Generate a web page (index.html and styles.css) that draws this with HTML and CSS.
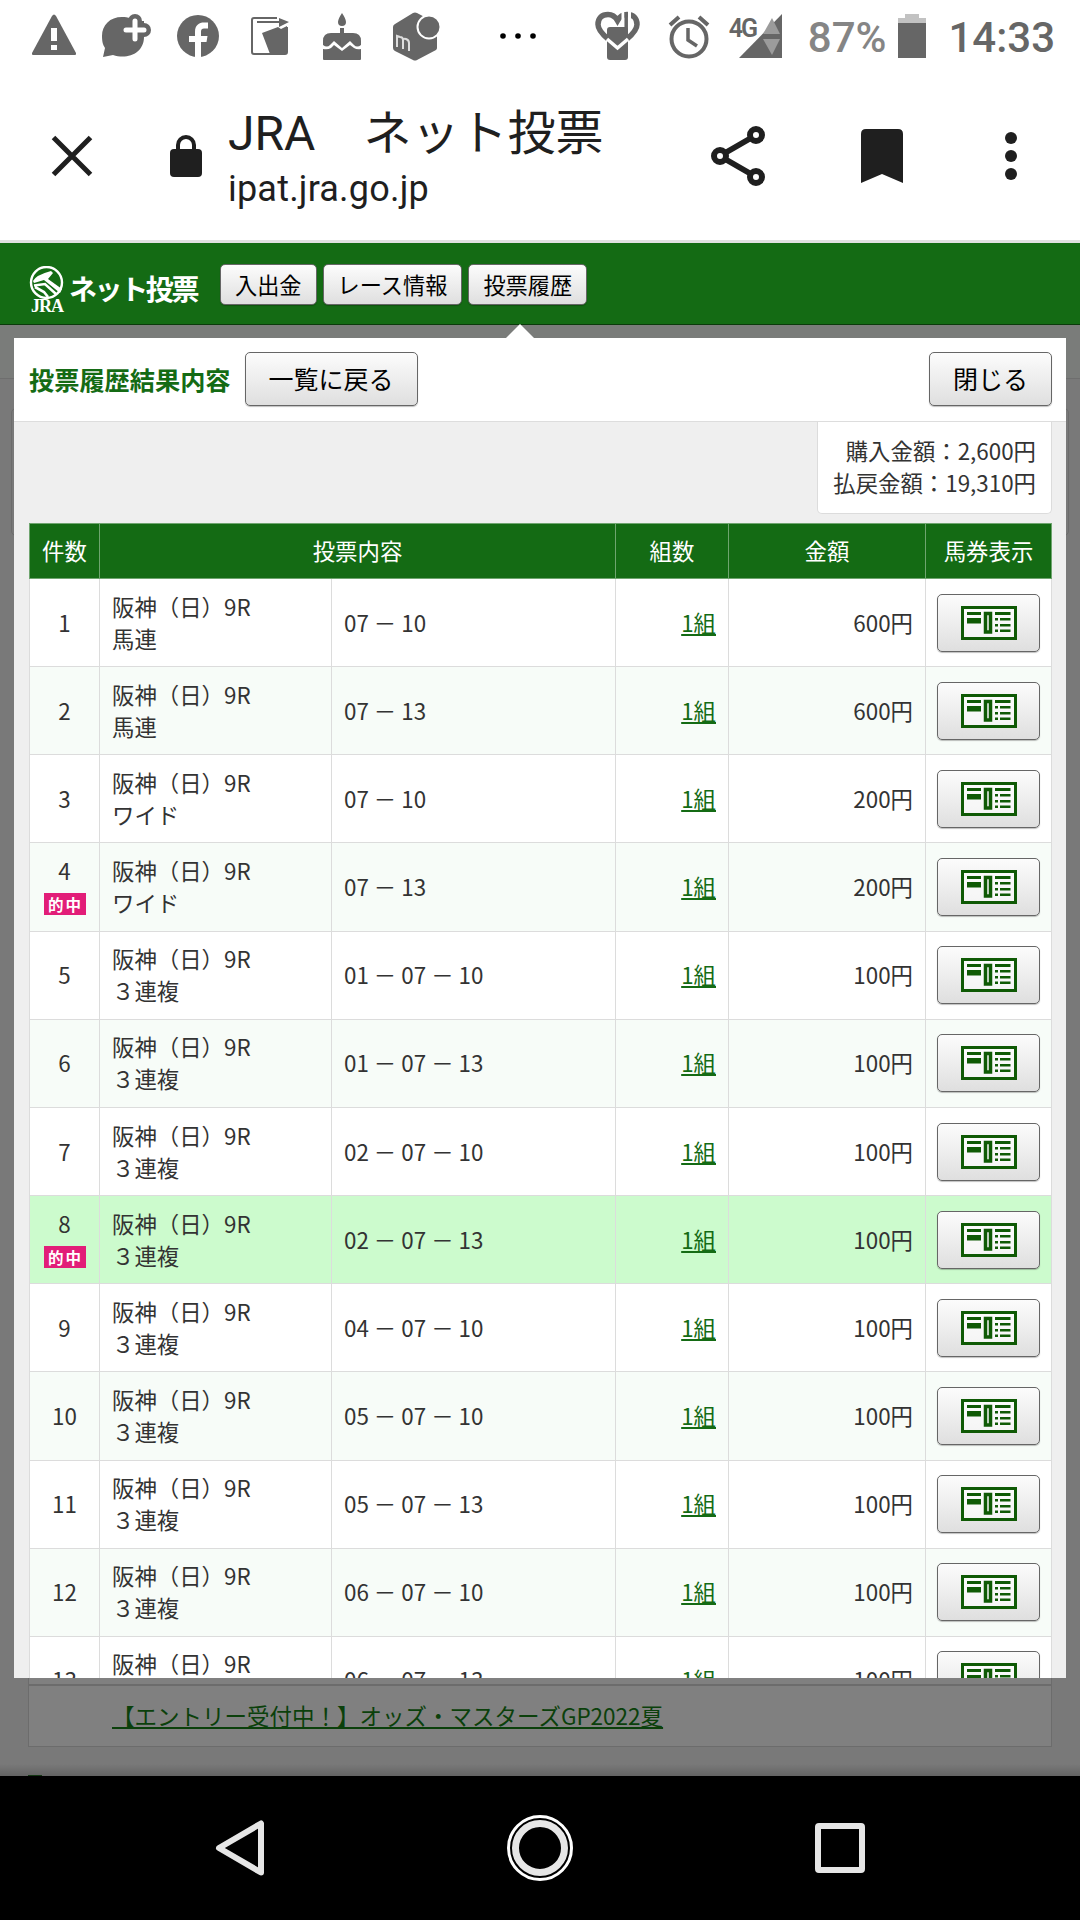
FILE: index.html
```
<!DOCTYPE html>
<html lang="ja">
<head>
    <meta charset="UTF-8">
    <meta name="viewport" content="width=device-width, initial-scale=1.0">
    <title>JRA　ネット投票</title>
    <link rel="stylesheet" href="styles.css">
</head>
<body>
    <!-- shared ticket icon -->
    <svg class="defs" width="0" height="0">
        <symbol id="ticket" viewBox="0 0 56 34">
            <path fill="#fff" fill-opacity=".6" d="M0 0h56v34H0z"/>
            <path fill="none" stroke="#0f5a05" stroke-width="3" d="M1.500 1.500h53v31h-53z"/>
            <path fill="#0f5a05" d="M6 6h14v3H6zM6 12h14v5.500H6zM34 6h15.500v3H34zM34 12h3v2.500h-3zM39 12h10.500v2.500H39zM34 18h3v2.500h-3zM39 18h10.500v2.500H39zM34 23.500h3V26h-3zM39 23.500h10.500V26H39z"/>
            <path fill="none" stroke="#0f5a05" stroke-width="3.500" d="M24.500 7.500h5v18.500h-5z"/>
        </symbol>
    </svg>

    <div class="status-bar">
        <div class="notifications">
            <svg width="48" height="48" viewBox="0 0 48 48"><path d="M26 4 46 41q.5 2-1 2H3q-1.500 0-1-2L22 4q2-3 4 0z"/><path fill="#fff" d="M21 16h6v13h-6zM21 33h6v5h-6z"/></svg>
            <svg width="52" height="48" viewBox="0 0 52 48"><path d="M22 5C10 5 2 13 2 24c0 6 1 9 3 12L3 45l10-2c15 5 31-2 31-18C44 12 34 5 22 5z"/><circle cx="35" cy="9" r="7"/><circle cx="44" cy="18" r="7"/><path d="M28 9h16v16H28z"/><path stroke="#fff" stroke-width="5" stroke-linecap="round" d="M35 9v18M26 18h18"/></svg>
            <svg width="44" height="44" viewBox="0 0 44 44"><circle cx="22" cy="22" r="21"/><path fill="#fff" d="M19 44V28h-6v-6h6v-4c0-7 4-9.500 9-9.500h4v6h-4c-2 0-3 1-3 3V22h6.500l-1 6H25v16z"/></svg>
            <svg width="42" height="42" viewBox="0 0 42 42"><path fill="none" stroke="#666" stroke-width="2" d="M28 3H5Q3 3 3 5v32q0 2 2 2h31q2 0 2-2V12"/><path d="m13 18 16-6 3 2 6-3v25q0 3-3 3H21z"/><path stroke="#666" stroke-width="2" d="M8 7h23"/><path d="m30 3 10 4-10 5z"/></svg>
            <svg width="40" height="48" viewBox="0 0 40 48"><path d="M20 1q4 6 4 9a4 4 0 0 1-8 0q0-3 4-9zM18 16h4v5h9q8 0 8 8v4q-4 3-7 0l-4-4-8 7-8-7-4 4q-3 3-7 0v-4q0-8 8-8h9z"/><path d="M1 37q5 1 8-1l3-3 8 6 8-6 4 3q3 2 7 1v10q0 1-1 1H2q-1 0-1-1z"/></svg>
            <svg class="box-icon" width="50" height="50" viewBox="0 0 50 50"><path d="M22 2q2-1 4 0l19 10q1 1 1 3v22q0 1-1 2L26 49q-2 1-4 0L4 40q-2-1-2-3V16q0-2 2-3z"/><circle cx="38" cy="16" r="11.500" stroke="#fff" stroke-width="2"/><path fill="none" stroke="#ddd" stroke-width="2" d="M6 36V25l3 1q3 0 3 3v9-8q0-3 3-2 3 1 3 4v8"/></svg>
        </div>
        <svg class="more-notifications" width="36" height="8" viewBox="0 0 36 8"><circle cx="3" cy="4" r="2.800"/><circle cx="18" cy="4" r="2.800"/><circle cx="33" cy="4" r="2.800"/></svg>
        <div class="system-icons">
            <svg width="46" height="50" viewBox="0 0 46 50"><path fill="none" stroke="#666" stroke-width="5.500" d="M13 28C6 22 3 18 3 13.500 3 7 7 3.500 13 3.500q6 0 9.500 6 3.500-6 9.500-6c6 0 10 3.500 10 10 0 4.500-3 8.500-10 14.500"/><path d="M12 19q0-3 3-3h15q3 0 3 3v27q0 3-3 3H15q-3 0-3-3z"/><path fill="none" stroke="#fff" stroke-width="3.500" d="m12 28 10.500 9L33 28"/><path stroke="#fff" stroke-width="3" d="M28 0v11M34.500 0v16"/><path stroke="#666" stroke-width="3.500" d="M31.200 1v20"/></svg>
            <svg width="42" height="46" viewBox="0 0 42 46"><g fill="none" stroke="#666" stroke-width="4"><circle cx="21" cy="26" r="17.500"/><path stroke-width="3.500" d="M20 15v12l9 6"/><path d="m2 12 9-8M40 12l-9-8"/></g></svg>
            <div class="signal">
                <span>4G</span>
                <svg width="43" height="44" viewBox="0 0 43 44"><path d="M43 0v44H0z"/><path fill="#9b9b9b" d="m33 4 8 16H24zM24 25h17l-8 16z"/></svg>
            </div>
            <span class="battery-level">87%</span>
            <svg width="28" height="44" viewBox="0 0 28 44"><path fill="#c2c2c2" d="M7 0h14v4h7v7H0V4h7z"/><path d="M0 9h28v35H0z"/></svg>
            <span class="clock">14:33</span>
        </div>
    </div>

    <div class="toolbar">
        <svg class="close-tab" width="42" height="42" viewBox="0 0 42 42"><path stroke="#1f1f1f" stroke-width="5" d="m2.500 2.500 37 37M39.500 2.500l-37 37"/></svg>
        <svg class="lock" width="32" height="44" viewBox="0 0 32 44"><path fill="none" stroke="#1f1f1f" stroke-width="4" d="M8 17v-6a8 8 0 0 1 16 0v6"/><rect y="15" width="32" height="28" rx="4" fill="#1f1f1f"/></svg>
        <div class="page-info">
            <div class="page-title">JRA　ネット投票</div>
            <div class="page-url">ipat.jra.go.jp</div>
        </div>
        <div class="toolbar-actions">
            <svg width="54" height="60" viewBox="0 0 54 60"><g fill="none" stroke="#1f1f1f" stroke-width="6"><circle cx="9" cy="30" r="6"/><circle cx="45" cy="9" r="6"/><circle cx="45" cy="51" r="6"/><path stroke-width="5.500" d="m14 27 26-15M14 33l26 15"/></g></svg>
            <svg width="42" height="54" viewBox="0 0 42 54"><path fill="#1f1f1f" d="M5 0h32q5 0 5 5v49l-21-9-21 9V5q0-5 5-5z"/></svg>
            <svg width="12" height="48" viewBox="0 0 12 48"><circle cx="6" cy="6" r="6"/><circle cx="6" cy="24" r="6"/><circle cx="6" cy="42" r="6"/></svg>
        </div>
    </div>

    <div class="page">
        <header class="site-header">
            <div class="logo">
                <div class="logo-mark">
                    <svg width="36" height="34" viewBox="0 0 36 34" fill="none" stroke="#fff"><circle cx="17.500" cy="16.500" r="15.500" stroke-width="2.400"/><path fill="#fff" stroke="none" d="M4 15q3-6 18-10l2 2-5 6 14 10-2 4-16-13-10 3z"/><path stroke-width="2.600" d="M5 19.500 16 18l11 10M6 21l9 5 4 5"/></svg>
                    <span>JRA</span>
                </div>
                <span class="logo-text">ネット投票</span>
            </div>
            <nav class="menu">
                <button class="btn btn-menu">入出金</button>
                <button class="btn btn-menu">レース情報</button>
                <button class="btn btn-menu">投票履歴</button>
            </nav>
        </header>

        <main class="background-page">
            <div class="background-strip"></div>
            <div class="background-box"></div>
            <div class="news">
                <a href="#">【エントリー受付中！】オッズ・マスターズGP2022夏</a>
            </div>
            <div class="background-marker"></div>
        </main>

        <section class="modal">
            <div class="modal-header">
                <h1>投票履歴結果内容</h1>
                <button class="btn btn-large">一覧に戻る</button>
                <button class="btn btn-large btn-close">閉じる</button>
            </div>
            <div class="modal-body">
                <div class="summary">
                    <div>購入金額：2,600円</div>
                    <div>払戻金額：19,310円</div>
                </div>
                <table class="bets">
                    <colgroup>
                        <col class="col-no"><col class="col-race"><col class="col-pick"><col class="col-sets"><col class="col-amount"><col class="col-ticket">
                    </colgroup>
                    <thead>
                        <tr><th>件数</th><th colspan="2">投票内容</th><th>組数</th><th>金額</th><th>馬券表示</th></tr>
                    </thead>
                    <tbody>
                        <tr>
                            <td class="no">1</td><td>阪神（日）9R<br>馬連</td><td>07 － 10</td>
                            <td class="num"><a href="#">1組</a></td><td class="num">600円</td>
                            <td class="ticket"><button class="btn"><svg><use href="#ticket"/></svg></button></td>
                        </tr>
                        <tr>
                            <td class="no">2</td><td>阪神（日）9R<br>馬連</td><td>07 － 13</td>
                            <td class="num"><a href="#">1組</a></td><td class="num">600円</td>
                            <td class="ticket"><button class="btn"><svg><use href="#ticket"/></svg></button></td>
                        </tr>
                        <tr>
                            <td class="no">3</td><td>阪神（日）9R<br>ワイド</td><td>07 － 10</td>
                            <td class="num"><a href="#">1組</a></td><td class="num">200円</td>
                            <td class="ticket"><button class="btn"><svg><use href="#ticket"/></svg></button></td>
                        </tr>
                        <tr>
                            <td class="no">4<span class="hit">的中</span></td><td>阪神（日）9R<br>ワイド</td><td>07 － 13</td>
                            <td class="num"><a href="#">1組</a></td><td class="num">200円</td>
                            <td class="ticket"><button class="btn"><svg><use href="#ticket"/></svg></button></td>
                        </tr>
                        <tr>
                            <td class="no">5</td><td>阪神（日）9R<br>３連複</td><td>01 － 07 － 10</td>
                            <td class="num"><a href="#">1組</a></td><td class="num">100円</td>
                            <td class="ticket"><button class="btn"><svg><use href="#ticket"/></svg></button></td>
                        </tr>
                        <tr>
                            <td class="no">6</td><td>阪神（日）9R<br>３連複</td><td>01 － 07 － 13</td>
                            <td class="num"><a href="#">1組</a></td><td class="num">100円</td>
                            <td class="ticket"><button class="btn"><svg><use href="#ticket"/></svg></button></td>
                        </tr>
                        <tr>
                            <td class="no">7</td><td>阪神（日）9R<br>３連複</td><td>02 － 07 － 10</td>
                            <td class="num"><a href="#">1組</a></td><td class="num">100円</td>
                            <td class="ticket"><button class="btn"><svg><use href="#ticket"/></svg></button></td>
                        </tr>
                        <tr class="selected">
                            <td class="no">8<span class="hit">的中</span></td><td>阪神（日）9R<br>３連複</td><td>02 － 07 － 13</td>
                            <td class="num"><a href="#">1組</a></td><td class="num">100円</td>
                            <td class="ticket"><button class="btn"><svg><use href="#ticket"/></svg></button></td>
                        </tr>
                        <tr>
                            <td class="no">9</td><td>阪神（日）9R<br>３連複</td><td>04 － 07 － 10</td>
                            <td class="num"><a href="#">1組</a></td><td class="num">100円</td>
                            <td class="ticket"><button class="btn"><svg><use href="#ticket"/></svg></button></td>
                        </tr>
                        <tr>
                            <td class="no">10</td><td>阪神（日）9R<br>３連複</td><td>05 － 07 － 10</td>
                            <td class="num"><a href="#">1組</a></td><td class="num">100円</td>
                            <td class="ticket"><button class="btn"><svg><use href="#ticket"/></svg></button></td>
                        </tr>
                        <tr>
                            <td class="no">11</td><td>阪神（日）9R<br>３連複</td><td>05 － 07 － 13</td>
                            <td class="num"><a href="#">1組</a></td><td class="num">100円</td>
                            <td class="ticket"><button class="btn"><svg><use href="#ticket"/></svg></button></td>
                        </tr>
                        <tr>
                            <td class="no">12</td><td>阪神（日）9R<br>３連複</td><td>06 － 07 － 10</td>
                            <td class="num"><a href="#">1組</a></td><td class="num">100円</td>
                            <td class="ticket"><button class="btn"><svg><use href="#ticket"/></svg></button></td>
                        </tr>
                        <tr>
                            <td class="no">13</td><td>阪神（日）9R<br>&nbsp;</td><td>06 － 07 － 13</td>
                            <td class="num"><a href="#">1組</a></td><td class="num">100円</td>
                            <td class="ticket"><button class="btn"><svg><use href="#ticket"/></svg></button></td>
                        </tr>
                    </tbody>
                </table>
            </div>
        </section>
    </div>

    <div class="nav-bar">
        <svg width="66" height="66" viewBox="0 0 66 66"><path stroke-width="6" stroke-linejoin="round" d="M54 8.500v49L12 33z"/></svg>
        <svg width="66" height="66" viewBox="0 0 66 66"><circle cx="33" cy="33" r="31.500" stroke="#fff" stroke-width="3"/><circle cx="33" cy="33" r="24.500" stroke-width="7"/></svg>
        <svg width="66" height="66" viewBox="0 0 66 66"><rect x="11" y="11" width="44" height="44" rx="1" stroke-width="6" stroke-linejoin="round"/></svg>
    </div>
</body>
</html>
```
FILE: styles.css
```
:root {
    --green: #146b14;
    --border-color: #dcdcdc;
    --text-color: #333;
    --icon-gray: #666;
}

* {
    box-sizing: border-box;
}

body {
    width: 1080px;
    height: 1920px;
    margin: 0;
    overflow: hidden;
    display: flex;
    flex-direction: column;
    background: #fff;
    color: var(--text-color);
    font-family: "Noto Sans CJK JP", sans-serif;
    font-size: 22.4px;
    line-height: 32px;
}

svg {
    display: block;
    flex: none;
}

.defs {
    position: absolute;
}

/* Android status bar */
.status-bar {
    height: 72px;
    flex: none;
    display: flex;
    align-items: center;
    padding: 0 25px 0 18px;
    fill: var(--icon-gray);
    color: var(--icon-gray);
    font-family: Roboto, sans-serif;
}

.notifications {
    display: grid;
    grid-template-columns: repeat(6, 72px);
    justify-items: center;
    align-items: center;
}

.box-icon {
    margin-left: 3px;
}

.more-notifications {
    margin-left: 50px;
    fill: #000;
}

.system-icons {
    display: flex;
    align-items: center;
    margin-left: auto;
}

.signal {
    display: flex;
    margin: 0 26px 0 19px;
}

.system-icons > svg:nth-child(2) {
    margin-left: 27px;
}

.signal span {
    width: 26px;
    margin-right: -16px;
    padding-top: 2px;
    font-size: 25px;
    font-weight: 600;
    line-height: 26px;
    letter-spacing: -2px;
}

.battery-level,
.clock {
    padding-top: 3px;
    font-size: 42px;
    font-weight: 500;
    line-height: 50px;
}

.battery-level {
    margin-right: 12px;
    color: #858585;
}

.clock {
    margin-left: 22px;
}

/* browser toolbar */
.toolbar {
    height: 171px;
    flex: none;
    display: flex;
    align-items: center;
    padding: 0 63px 0 51px;
    border-bottom: 3px solid #e0e0e0;
    color: #1f1f1f;
    fill: #1f1f1f;
}

.lock {
    margin-left: 77px;
}

.page-info {
    margin-left: 26px;
    padding-top: 7px;
    font-family: Roboto, "Noto Sans CJK JP", sans-serif;
    white-space: nowrap;
}

.page-title {
    font-size: 48px;
    line-height: 59px;
}

.page-url {
    font-size: 36px;
    line-height: 52px;
    letter-spacing: 0.2px;
}

.toolbar-actions {
    display: flex;
    align-items: center;
    gap: 96px;
    margin-left: auto;
}

.toolbar-actions svg:last-child {
    margin-left: 6px;
}

/* web page */
.page {
    position: relative;
    height: 1533px;
    flex: none;
    overflow: hidden;
    display: flex;
    flex-direction: column;
    background: #797979;
}

.site-header {
    height: 82px;
    flex: none;
    display: flex;
    align-items: flex-start;
    padding: 21px 28px 0 29px;
    background: var(--green);
    border-bottom: 1px solid #0b3a0b;
}

.logo {
    display: flex;
    width: 191px;
    color: #fff;
}

.logo-mark {
    width: 36px;
    margin-top: 2px;
}

.logo-mark span {
    display: block;
    margin-left: 2px;
    font-family: "Liberation Serif", serif;
    font-size: 18px;
    font-weight: 700;
    line-height: 13px;
    letter-spacing: -1px;
}

.logo-text {
    margin-left: 4px;
    font-size: 28px;
    font-weight: 700;
    line-height: 49px;
    letter-spacing: -2.400px;
    white-space: nowrap;
}

.menu {
    display: flex;
    gap: 6px;
}

.btn {
    padding: 0;
    border: 1px solid #666;
    border-radius: 5px;
    background: linear-gradient(#fcfcfc, #dfdfdf);
    box-shadow: 0 1px 1px rgba(0, 0, 0, 0.25);
    color: #000;
    font-family: inherit;
    white-space: nowrap;
}

.btn-menu {
    height: 41px;
    padding: 0 14px 2px;
    font-size: 22.2px;
    line-height: 36px;
}

.btn-large {
    height: 54px;
    padding: 0 23px 2px;
    font-size: 25px;
    line-height: 48px;
}

.background-page {
    flex: 1;
    display: flex;
    flex-direction: column;
}

.background-strip {
    height: 54px;
    background: #7a7c7a;
    border-bottom: 1px solid #6e6e6e;
}

.background-box {
    height: 128px;
    margin: 29px 11px 0;
    border: 1px solid #6c6c6c;
    border-radius: 5px;
}

.news {
    height: 94px;
    margin: 1117px 28px 0;
    padding: 45px 83px 0;
    background: linear-gradient(#6c6c6c, #6c6c6c) 0 30px / 100% 2px no-repeat #808080;
    border: 1px solid #6c6c6c;
    font-size: 22.500px;
}

.news a {
    color: #0b400b;
}

.background-marker {
    width: 14px;
    height: 2px;
    margin: 28px 0 0 28px;
    background: #164016;
}

.page::after {
    content: "";
    position: absolute;
    right: 0;
    bottom: 0;
    left: 0;
    height: 12px;
    background: linear-gradient(transparent, rgba(0, 0, 0, 0.18));
}

/* history dialog over the page */
.modal {
    position: absolute;
    top: 95px;
    left: 14px;
    width: 1052px;
    height: 1340px;
    background: #efefef;
}

/* arrow under the active menu button */
.modal::before {
    content: "";
    position: absolute;
    top: -14px;
    left: 492px;
    border: solid transparent;
    border-width: 0 14px 14px;
    border-bottom-color: #fff;
}

.modal-header {
    height: 84px;
    display: flex;
    align-items: center;
    padding: 0 14px 1px 15px;
    background: #fff;
    border-bottom: 1px solid #ddd;
}

h1 {
    margin: 0 14px 0 0;
    color: var(--green);
    font-size: 25.2px;
    line-height: 36px;
}

.btn-close {
    margin-left: auto;
}

.modal-body {
    height: 1256px;
    overflow: hidden;
    padding: 0 14px;
}

.summary {
    width: 235px;
    height: 92px;
    margin: 0 0 9px auto;
    padding: 12px 15px 0 0;
    background: #fff;
    border: 1px solid var(--border-color);
    border-top: 0;
    border-radius: 0 0 5px 5px;
    text-align: right;
}

.bets {
    width: 1023px;
    margin-left: 1px;
    table-layout: fixed;
    border-collapse: collapse;
}

.col-no { width: 70px; }
.col-race { width: 232px; }
.col-pick { width: 284px; }
.col-sets { width: 113px; }
.col-amount { width: 197px; }
.col-ticket { width: 126px; }

th {
    height: 55px;
    padding: 0 0 3px;
    background: var(--green);
    border: 1px solid #6fa56f;
    color: #fff;
    font-weight: 400;
}

td {
    height: 88.170px;
    padding: 0 12px 2px;
    background: #fff;
    border: 1px solid var(--border-color);
}

tr:nth-child(even) td {
    background: #f7fcf8;
}

tr.selected td {
    background: #ccfbcd;
}

a {
    color: var(--green);
}

.no {
    padding: 0 0 2px;
    text-align: center;
}

.hit {
    display: block;
    width: 42px;
    margin: 7px auto 3px;
    background: #e21d78;
    color: #fff;
    font-size: 15.500px;
    font-weight: 700;
    line-height: 22px;
    letter-spacing: 2px;
    text-indent: 2px;
}

.num {
    text-align: right;
}

.ticket {
    padding-bottom: 0;
}

.ticket .btn {
    display: flex;
    align-items: center;
    justify-content: center;
    width: 103px;
    height: 58px;
    margin: 0 -1px;
}

.ticket svg {
    width: 56px;
    height: 34px;
}

/* Android navigation bar */
.nav-bar {
    height: 144px;
    flex: none;
    display: flex;
    align-items: center;
    justify-content: center;
    gap: 234px;
    background: #000;
    fill: none;
    stroke: #e6e6e6;
}
```
